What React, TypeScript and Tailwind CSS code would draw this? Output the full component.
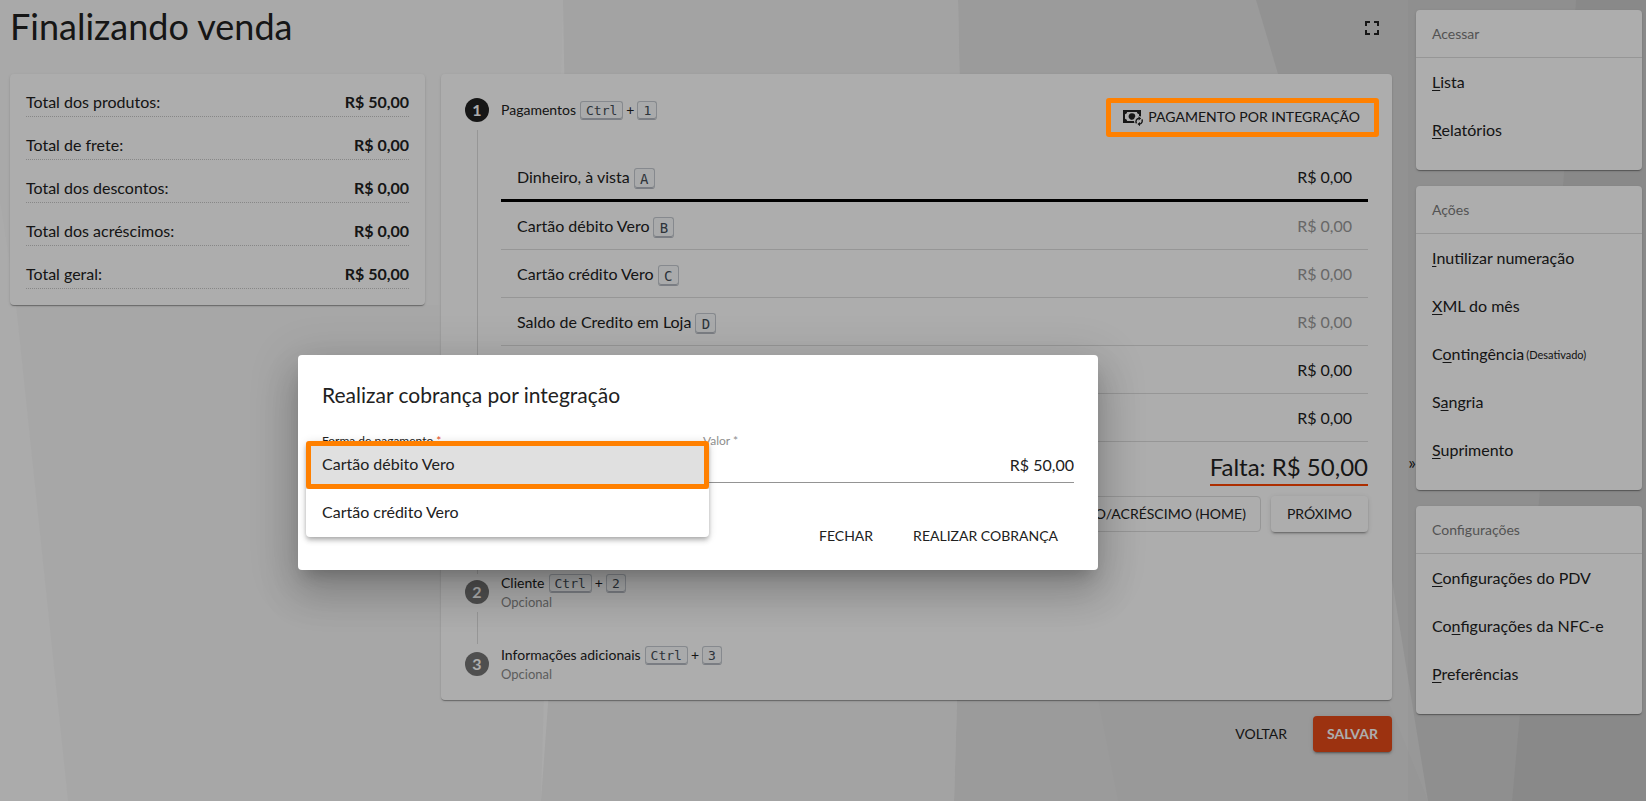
import React from "react";

const card = "rounded bg-white shadow-[0_2px_1px_-1px_rgba(0,0,0,.2),0_1px_1px_rgba(0,0,0,.14),0_1px_3px_rgba(0,0,0,.12)]";

const totals = [
  ["Total dos produtos:", "R$ 50,00"],
  ["Total de frete:", "R$ 0,00"],
  ["Total dos descontos:", "R$ 0,00"],
  ["Total dos acréscimos:", "R$ 0,00"],
  ["Total geral:", "R$ 50,00"],
];

const payments = [
  { name: "Dinheiro, à vista", hotkey: "A", active: true, muted: false },
  { name: "Cartão débito Vero", hotkey: "B", active: false, muted: true },
  { name: "Cartão crédito Vero", hotkey: "C", active: false, muted: true },
  { name: "Saldo de Credito em Loja", hotkey: "D", active: false, muted: true },
  { name: "", hotkey: "", active: false, muted: false },
  { name: "", hotkey: "", active: false, muted: false },
];

type Item = { pre?: string; key: string; post: string; note?: string };

const menus: { title: string; items: Item[] }[] = [
  { title: "Acessar", items: [{ key: "L", post: "ista" }, { key: "R", post: "elatórios" }] },
  {
    title: "Ações",
    items: [
      { key: "I", post: "nutilizar numeração" },
      { key: "X", post: "ML do mês" },
      { pre: "C", key: "o", post: "ntingência", note: "(Desativado)" },
      { pre: "S", key: "a", post: "ngria" },
      { key: "S", post: "uprimento" },
    ],
  },
  {
    title: "Configurações",
    items: [
      { key: "C", post: "onfigurações do PDV" },
      { pre: "Co", key: "n", post: "figurações da NFC-e" },
      { key: "P", post: "referências" },
    ],
  },
];

function Key({ children, large = false }: { children: string; large?: boolean }) {
  return (
    <kbd
      className={`inline-block rounded-[3px] border border-[#c6cbd1] border-b-[#b4b9c1] bg-[#fafbfc] text-center font-['DejaVu_Sans_Mono',monospace] text-[#444d56] shadow-[inset_0_-1px_0_#b4b9c1] ${
        large ? "mt-1 h-[21px] min-w-[21px] px-1 text-sm leading-5" : "h-[19px] min-w-[19px] px-[5px] text-[13px] leading-[17px]"
      }`}
    >
      {children}
    </kbd>
  );
}

function Backdrop() {
  return (
    <svg className="absolute inset-0 h-full w-full" viewBox="0 0 1646 801" preserveAspectRatio="none" aria-hidden="true">
      <rect width="1646" height="801" fill="#fcfcfc" />
      <path d="M0 0H563L555 305H16L0 200Z" fill="#f9f9f9" />
      <path d="M16 305H555L541 801H68Z" fill="#f7f7f7" />
      <path d="M563 0H958L966 400L954 801H541L570 400Z" fill="#f0f0f0" />
      <path d="M958 0H1646V801H954L966 400Z" fill="#e5e5e5" />
      <path d="M1256 0H1646V801H1428L1392 580L1278 74Z" fill="#d8d8d8" />
      <path d="M1098 700H1388L1428 801H1118Z" fill="#e2e2e2" />
      <path d="M1576 0H1646V801H1512L1548 400Z" fill="#d0d0d0" />
      <rect x="1408" width="238" height="801" fill="#000" opacity=".02" />
    </svg>
  );
}

function Highlight() {
  return <span aria-hidden="true" className="pointer-events-none absolute inset-0 z-30 rounded-[3px] border-5 border-[#ff8000]" />;
}

function MoneySyncIcon() {
  return (
    <svg viewBox="0 0 21 18" className="h-[18px] w-[21px]" aria-hidden="true">
      <path
        fillRule="evenodd"
        fill="currentColor"
        d="M0 2H18V8.500C17.400 8.100 16.700 7.900 16 7.900V6.300A2.600 2.600 0 0 1 13.800 4H4.200A2.600 2.600 0 0 1 2 6.300V10.700A2.600 2.600 0 0 1 4.200 13H11C11 13.700 11.200 14.400 11.500 15H0Z"
      />
      <path fill="currentColor" d="M9 5.200A3.300 3.300 0 1 0 11 11C11.500 9.800 12 9 12.300 8.600A3.300 3.300 0 0 0 9 5.200Z" />
      <path d="M13.500 15.400A3.300 3.300 0 0 1 16 10.300M18.900 11.300A3.300 3.300 0 0 1 16.600 16.100" fill="none" stroke="currentColor" strokeWidth="1.400" />
      <path d="M15.600 8.200L18.200 10.400L15.600 12.600ZM17 14V18.200L14.400 16.100Z" fill="currentColor" />
    </svg>
  );
}

function StepNumber({ n, active = false }: { n: string; active?: boolean }) {
  return (
    <span className={`flex size-6 shrink-0 items-center justify-center rounded-full text-base font-bold text-white ${active ? "bg-[#212121]" : "bg-[#757575]"}`}>
      {n}
    </span>
  );
}

function StepTitle({ n, title }: { n: string; title: string }) {
  return (
    <h2 className="flex h-[18px] items-center gap-1 text-sm">
      {title}
      <span className="flex items-center gap-[3px]">
        <Key>Ctrl</Key>+<Key>{n}</Key>
      </span>
    </h2>
  );
}

function Step({ n, title, last = false }: { n: string; title: string; last?: boolean }) {
  return (
    <li className={`flex gap-3 ${last ? "" : "h-[72px]"}`}>
      <div className="flex w-6 flex-col items-center pt-[6px]">
        <StepNumber n={n} />
        {!last && <span className="mt-2 h-8 w-px bg-[#dedede]" />}
      </div>
      <div>
        <StepTitle n={n} title={title} />
        <p className="text-[13px] leading-5 text-[#8a8a8a]">Opcional</p>
      </div>
    </li>
  );
}

function ChargeDialog() {
  return (
    <div className="absolute inset-0 z-10 flex items-start justify-center bg-black/32 pt-[355px] pr-[250px]">
      <div
        role="dialog"
        aria-labelledby="charge-title"
        className="w-[800px] rounded bg-white px-6 pt-6 pb-4 shadow-[0_11px_15px_-7px_rgba(0,0,0,.2),0_24px_38px_3px_rgba(0,0,0,.14),0_9px_46px_8px_rgba(0,0,0,.12)]"
      >
        <h2 id="charge-title" className="text-[21px] leading-8">Realizar cobrança por integração</h2>
        <div className="grid grid-cols-2 gap-[10px] pt-[21px]">
          <div className="relative">
            <label htmlFor="method" className="block text-xs leading-[18px]">
              Forma de pagamento <span className="text-[#e64a19]">*</span>
            </label>
            <select id="method" className="h-[33px] w-full appearance-none border-b border-[#949494] pb-1">
              <option>Cartão débito Vero</option>
              <option>Cartão crédito Vero</option>
            </select>
            <ul
              role="listbox"
              aria-label="Forma de pagamento"
              className="absolute -inset-x-4 top-[9px] rounded bg-white shadow-[0_2px_4px_-1px_rgba(0,0,0,.2),0_4px_5px_rgba(0,0,0,.14),0_1px_10px_rgba(0,0,0,.12)]"
            >
              <li role="option" aria-selected="true" className="relative flex h-12 items-center rounded-t bg-[#e0e0e0] px-4 pb-[2px]">
                Cartão débito Vero
                <Highlight />
              </li>
              <li role="option" aria-selected="false" className="flex h-12 items-center px-4 pb-[2px]">Cartão crédito Vero</li>
            </ul>
          </div>
          <div>
            <label htmlFor="amount" className="block text-xs leading-[18px] text-[#8e8e8e]">Valor *</label>
            <input id="amount" defaultValue="R$ 50,00" className="h-[33px] w-full border-b border-[#949494] pb-1 text-right outline-none" />
          </div>
        </div>
        <div className="flex justify-end gap-2 pt-[35px] text-sm">
          <button className="h-9 px-4">FECHAR</button>
          <button className="h-9 px-4">REALIZAR COBRANÇA</button>
        </div>
      </div>
    </div>
  );
}

export default function App() {
  return (
    <div className="relative min-h-screen overflow-hidden font-['Lato','Liberation_Sans',sans-serif] text-base text-[#212121]">
      <Backdrop />
      <div className="relative flex">
        <main className="min-w-0 flex-1 pl-[10px]">
          <header className="flex h-[74px] items-start justify-between pr-2">
            <h1 className="pt-1 text-4xl leading-[44px]">Finalizando venda</h1>
            <button aria-label="Tela cheia" className="mt-4 p-0">
              <svg viewBox="0 0 24 24" className="size-6" fill="currentColor" aria-hidden="true">
                <path d="M5 5h5v2H7v3H5zM14 5h5v5h-2V7h-3zM17 14h2v5h-5v-2h3zM5 14h2v3h3v2H5z" />
              </svg>
            </button>
          </header>
          <div className="flex items-start gap-4">
            <section className={`${card} w-[415px] shrink-0 px-4 pt-[14px] pb-4`}>
              <dl className="flex flex-col gap-[14px]">
                {totals.map(([label, value]) => (
                  <div key={label} className="flex h-[29px] justify-between border-b border-dotted border-[#c8c8c8] leading-[27px]">
                    <dt>{label}</dt>
                    <dd className="font-bold">{value}</dd>
                  </div>
                ))}
              </dl>
            </section>
            <div className="min-w-0 flex-1">
              <section className={`${card} px-6 pt-6 pb-4`}>
                <ol>
                  <li className="flex gap-3">
                    <div className="flex w-6 flex-col items-center">
                      <StepNumber n="1" active />
                      <span className="mt-2 w-px flex-1 bg-[#dedede]" />
                    </div>
                    <div className="min-w-0 flex-1">
                      <div className="flex h-14 items-start justify-between">
                        <div className="pt-[3px]">
                          <StepTitle n="1" title="Pagamentos" />
                        </div>
                        <button className="relative -mr-[11px] flex h-[39px] w-[273px] items-center justify-end gap-1 pr-[19px] pb-[2px] text-sm">
                          <MoneySyncIcon />
                          PAGAMENTO POR INTEGRAÇÃO
                          <Highlight />
                        </button>
                      </div>
                      <ul>
                        {payments.map((p, i) => (
                          <li key={i} className={`flex h-12 items-center justify-between px-4 ${p.active ? "border-b-[3px] border-black" : "border-b border-[#dedede]"}`}>
                            <span className="flex items-center gap-1">
                              {p.name}
                              {p.hotkey && <Key large>{p.hotkey}</Key>}
                            </span>
                            <span className={p.muted ? "text-[#999]" : ""}>R$ 0,00</span>
                          </li>
                        ))}
                      </ul>
                      <div className="flex justify-end pt-[7px]">
                        <strong className="border-b-2 border-[#ff4500] text-2xl leading-[35px] font-normal">Falta: R$ 50,00</strong>
                      </div>
                      <div className="flex justify-end gap-[10px] pt-[10px] text-sm">
                        <button className="h-9 rounded border border-[#dedede] px-[14px]">DESCONTO/ACRÉSCIMO (HOME)</button>
                        <button className="h-9 rounded px-4 shadow-[0_3px_1px_-2px_rgba(0,0,0,.2),0_2px_2px_rgba(0,0,0,.14),0_1px_5px_rgba(0,0,0,.12)]">PRÓXIMO</button>
                      </div>
                      <div className="h-[42px]" />
                    </div>
                  </li>
                  <Step n="2" title="Cliente" />
                  <Step n="3" title="Informações adicionais" last />
                </ol>
              </section>
              <div className="flex justify-end gap-[10px] pt-4 text-sm">
                <button className="h-9 px-4">VOLTAR</button>
                <button className="h-9 rounded bg-[#e64a19] px-[14px] font-bold text-white shadow-[0_3px_1px_-2px_rgba(0,0,0,.2),0_2px_2px_rgba(0,0,0,.14),0_1px_5px_rgba(0,0,0,.12)]">SALVAR</button>
              </div>
            </div>
          </div>
        </main>
        <button aria-label="Recolher menu" className="w-6 shrink-0 pt-[172px] pl-4 text-lg">»</button>
        <nav className="mr-1 flex w-[226px] shrink-0 flex-col gap-4 pt-[10px]">
          {menus.map((m) => (
            <section key={m.title} className={`${card} pb-4`}>
              <h2 className="h-12 border-b border-[#dedede] px-4 text-sm leading-[48px] text-[#7b7b7b]">{m.title}</h2>
              <ul>
                {m.items.map((i) => (
                  <li key={i.post}>
                    <a href="#" className="flex h-12 items-center px-4">
                      <span>{i.pre}<u className="underline-offset-2">{i.key}</u>{i.post}</span>
                      {i.note && <small className="ml-[2px] pt-[2px] text-[11px]">{i.note}</small>}
                    </a>
                  </li>
                ))}
              </ul>
            </section>
          ))}
        </nav>
      </div>
      <ChargeDialog />
    </div>
  );
}
